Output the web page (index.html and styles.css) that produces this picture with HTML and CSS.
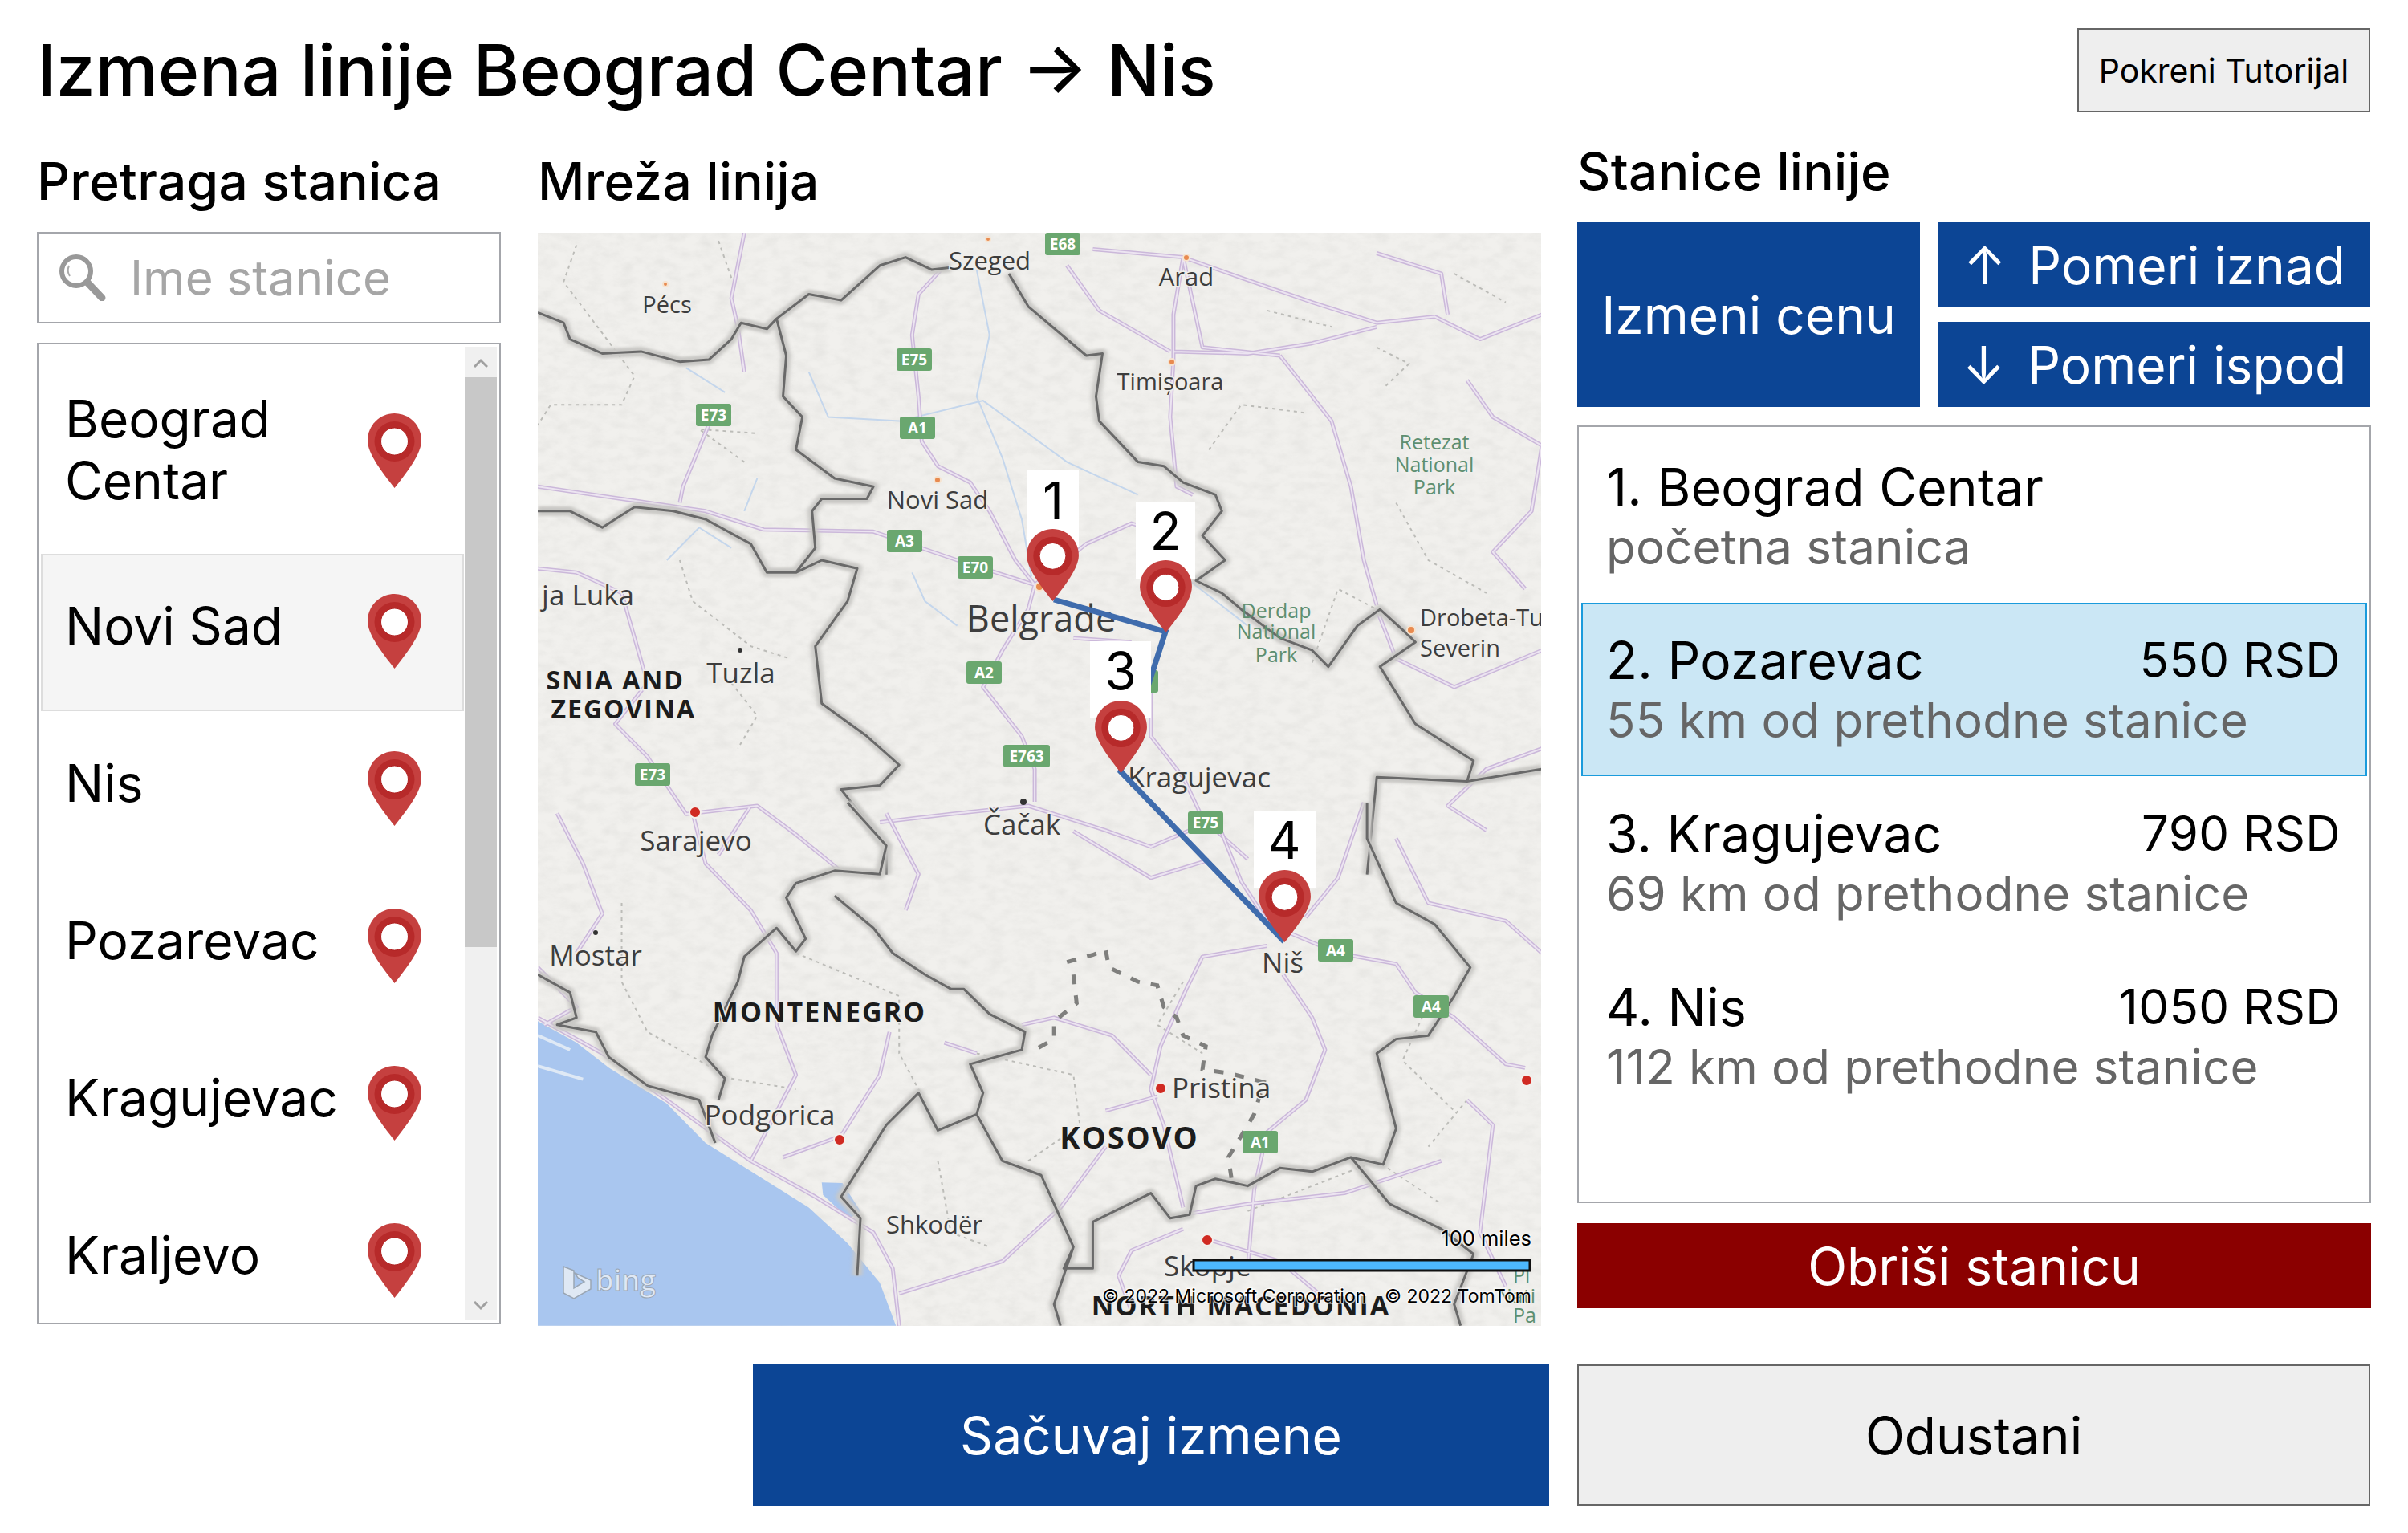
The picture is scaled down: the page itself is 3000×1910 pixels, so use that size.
FILE: index.html
```html
<!DOCTYPE html>
<html lang="sr">
<head>
  <meta charset="UTF-8">
  <title>Izmena linije</title>
  <link rel="stylesheet" href="styles.css">
</head>
<body>

<svg class="defs">
  <defs>
    <symbol id="pin" viewBox="0 0 67 93">
      <path class="pin-body" d="M33.5 0C52 0 67 15 67 34C67 50 50 72 33.5 93C17 72 0 50 0 34C0 15 15 0 33.5 0Z"/>
      <circle class="pin-ring" cx="33.5" cy="35" r="25"/>
      <circle class="pin-hole" cx="33.5" cy="35" r="17"/>
    </symbol>
  </defs>
</svg>

<div class="page">
  <header class="top">
    <h1>Izmena linije Beograd Centar → Nis</h1>
    <button class="btn btn-gray btn-tutorial">Pokreni Tutorijal</button>
  </header>

  <main class="columns">
    <section class="col col-search">
      <h2>Pretraga stanica</h2>
      <div class="search">
        <svg class="search-icon" viewBox="0 0 58 58">
          <circle cx="21" cy="21" r="18" fill="none" stroke="#999" stroke-width="6"/>
          <path d="M35 35L53 54" stroke="#999" stroke-width="9" stroke-linecap="round"/>
          <path d="M12 14Q9 21 13 27" fill="none" stroke="#aaa" stroke-width="2"/>
        </svg>
        <span>Ime stanice</span>
      </div>
      <div class="stations">
        <div class="station-rows">
          <div class="station station-first"><span>Beograd Centar</span><svg class="pin"><use href="#pin"/></svg></div>
          <div class="station station-active"><span>Novi Sad</span><svg class="pin"><use href="#pin"/></svg></div>
          <div class="station"><span>Nis</span><svg class="pin"><use href="#pin"/></svg></div>
          <div class="station"><span>Pozarevac</span><svg class="pin"><use href="#pin"/></svg></div>
          <div class="station"><span>Kragujevac</span><svg class="pin"><use href="#pin"/></svg></div>
          <div class="station"><span>Kraljevo</span><svg class="pin"><use href="#pin"/></svg></div>
        </div>
        <div class="scrollbar">
          <div class="sb-arrow"><svg viewBox="0 0 18 12"><path d="M1 11L9 3L17 11" /></svg></div>
          <div class="sb-thumb"></div>
          <div class="sb-track"></div>
          <div class="sb-arrow sb-arrow-down"><svg viewBox="0 0 18 12"><path d="M1 1L9 9L17 1" /></svg></div>
        </div>
      </div>
    </section>

    <section class="col col-map">
      <h2>Mreža linija</h2>
      <svg class="map" viewBox="0 0 1250 1362">
        <defs>
          <filter id="grain" x="0" y="0" width="100%" height="100%">
            <feTurbulence type="fractalNoise" baseFrequency=".05 .09" numOctaves="4" seed="7"/>
            <feColorMatrix values="0 0 0 0 .5  0 0 0 0 .5  0 0 0 0 .48  1 1 0 0 -.8"/>
          </filter>
          <path id="roads-top" d="M625 90L590 150L580 250L590 400L595 510L620 570L670 610L700 680L740 800L770 860L760 920L720 1020L690 1110L750 1230L770 1310L770 1390M860 40L1000 60L1090 110L1200 170L1300 220L1390 205L1460 260L1556 200M1000 60L985 200L985 310L980 450L990 620L1015 640M985 290L1100 295L1200 270L1300 230M1150 300L1230 460L1260 620L1280 800L1300 910M320 0L300 160L310 230L320 340M270 450L225 620L220 660M0 620L130 650L260 680L350 725L520 730L650 800L770 860M950 1100L950 1230L1000 1330L1030 1430L1100 1530M1440 360L1480 450L1556 520L1540 680L1480 780L1530 870M1300 50L1400 100L1410 200M0 820L60 830L130 880L170 1100L120 1200L170 1280L230 1420L340 1400L400 1470L470 1560M530 1440L640 1420L760 1400L880 1460L950 1500L1040 1440M770 860L850 760L920 710L1010 750M830 990L920 1000M1556 1260L1470 1310L1410 1400L1470 1460M820 80L870 190L980 290M1000 60L1030 280L1150 300M330 1400L280 1520M1300 920L1330 1040L1420 1110L1556 1020"/>
          <path id="roads-bottom" d="M1155 480L1200 600L1220 690L1190 830L1130 920L1110 1080L1100 1300M1160 360L1240 420L1330 450L1360 530L1420 600L1500 730L1530 740M1130 400L1030 430L1005 520L965 680L950 800L970 900L1000 1130M240 30L260 170L330 300L370 420L370 620L400 760L330 1000M545 640L530 760L470 930L380 990M1000 1150L1100 1120L1250 1090L1300 1060L1400 1000M0 600L100 700L200 830L330 1000L430 1100L520 1200L550 1300L560 1460M880 860L960 820M750 620L800 600L890 650L950 760M560 1370L720 1280L810 1130L880 960M1440 830L1480 900L1460 1200L1500 1350M1000 1190L920 1250L900 1320L920 1420M1040 1220L1150 1280L1230 1400M1050 40L1090 220L1130 330M830 80L950 210L1040 160M1280 0L1240 210L1190 320M30 30L70 170L100 310L60 420M0 460L60 570L10 620M570 300L590 200L540 30M630 670L680 700M1330 100L1380 280L1500 330L1556 420"/>
        </defs>
        <rect class="land" width="1250" height="1362"/>
        <rect class="grain" width="1250" height="1362"/>

        <!-- sea and lakes -->
        <g transform="translate(0 710) scale(.804 .4464)">
          <path class="sea" d="M0 610L60 670L110 740L200 840L260 950L340 1040L420 1130L480 1230L530 1340L555 1460L0 1460Z"/>
          <path class="sea" d="M440 1060L472 1062L500 1140L482 1162L442 1095Z"/>
          <path class="foam" d="M0 650L50 690M0 735L70 772"/>
        </g>

        <!-- upper half of the map, traced from the crop -->
        <g transform="scale(.804 .51)">
          <path class="river" d="M680 90L700 250L680 400L720 550L750 700L765 840M420 340L450 450L560 460L690 410L820 560L930 640M340 600L320 680M580 830L600 900L650 960M300 770L250 720L200 800M230 330L290 390M1010 850L1100 960"/>
          <path class="dots" d="M60 30L40 120L150 350L130 420L20 420L0 470M280 20L300 110M320 560L250 480L340 490M1040 530L1090 420L1190 440M1300 280L1350 320L1310 380M1420 100L1500 170M1330 660L1380 800L1470 880M220 800L240 900L330 1010L390 1040M1200 1050L1240 870L1300 920M300 1100L340 1180L310 1260M1130 190L1230 230"/>
          <use href="#roads-top" class="road-out"/>
          <use href="#roads-top" class="road-in"/>
          <path class="border-glow" d="M0 195L40 220L50 260L100 295L160 290L220 315L265 310L300 260L315 220L355 235L370 210L420 150L470 165L530 80L570 60L610 90L640 85M730 100L760 180L850 300L875 295L865 400L870 460L930 560L970 570L1000 610L1050 640L1060 680L1030 740L1065 800L1020 850L1060 880L1090 920L1150 990L1200 1020L1225 1060L1270 960L1305 920L1340 970L1360 1000L1305 1060L1360 1200L1450 1290L1440 1340L1556 1310M1440 1340L1300 1330L1285 1568M370 210L385 300L380 400L410 450L400 530L460 600L520 620L510 650L440 650L425 680L430 770L400 830L355 830L330 760L260 700L210 680L150 670L100 720L50 680L0 680M400 830L440 800L495 820L480 900L430 1010L440 1150L510 1230L560 1300L530 1350L470 1360L540 1500L540 1568"/>
          <path class="border" d="M0 195L40 220L50 260L100 295L160 290L220 315L265 310L300 260L315 220L355 235L370 210L420 150L470 165L530 80L570 60L610 90L640 85M730 100L760 180L850 300L875 295L865 400L870 460L930 560L970 570L1000 610L1050 640L1060 680L1030 740L1065 800L1020 850L1060 880L1090 920L1150 990L1200 1020L1225 1060L1270 960L1305 920L1340 970L1360 1000L1305 1060L1360 1200L1450 1290L1440 1340L1556 1310M1440 1340L1300 1330L1285 1568M370 210L385 300L380 400L410 450L400 530L460 600L520 620L510 650L440 650L425 680L430 770L400 830L355 830L330 760L260 700L210 680L150 670L100 720L50 680L0 680M400 830L440 800L495 820L480 900L430 1010L440 1150L510 1230L560 1300L530 1350L470 1360L540 1500L540 1568"/>
        </g>

        <!-- lower half -->
        <g transform="translate(0 710) scale(.804 .4464)">
          <path class="dots" d="M130 280L130 500L170 640L300 770L400 800M400 420L560 540L560 700L620 900M680 700L830 760L840 900L760 1000M1000 500L960 620L1030 700M1380 560L1340 720L1420 860M620 1000L640 1200L700 1240M1100 1140L1300 1000L1400 1120M1440 830L1380 960"/>
          <use href="#roads-bottom" class="road-out"/>
          <use href="#roads-bottom" class="road-in"/>
          <path class="border-glow" d="M480 0L540 120L530 200L460 190L400 225L385 265L415 380L400 415L370 350L320 430L310 500L270 650L260 710L290 770L280 830M460 260L520 350L550 420L600 480L640 520L660 520L700 590L755 640L750 690L670 730L690 810L680 870L620 915L590 810L540 900L470 1100L500 1160L495 1320M680 870L720 1000L780 1040L830 1240L815 1300L860 1300L860 1170L950 1090L980 1160L1010 1150L1020 1070L1050 1050L1100 1070L1150 1020L1200 1030L1260 990L1310 1010L1330 910L1300 700L1330 660L1380 650L1420 540L1445 460L1390 340L1330 280L1285 100L1285 0M1260 990L1320 1120L1400 1190L1450 1260L1420 1400L1430 1460M830 1240L800 1400L810 1460M0 480L50 530L60 600L30 620L90 640L110 710L170 790L250 830L275 950"/>
          <path class="border" d="M480 0L540 120L530 200L460 190L400 225L385 265L415 380L400 415L370 350L320 430L310 500L270 650L260 710L290 770L280 830M460 260L520 350L550 420L600 480L640 520L660 520L700 590L755 640L750 690L670 730L690 810L680 870L620 915L590 810L540 900L470 1100L500 1160L495 1320M680 870L720 1000L780 1040L830 1240L815 1300L860 1300L860 1170L950 1090L980 1160L1010 1150L1020 1070L1050 1050L1100 1070L1150 1020L1200 1030L1260 990L1310 1010L1330 910L1300 700L1330 660L1380 650L1420 540L1445 460L1390 340L1330 280L1285 100L1285 0M1260 990L1320 1120L1400 1190L1450 1260L1420 1400L1430 1460M830 1240L800 1400L810 1460M0 480L50 530L60 600L30 620L90 640L110 710L170 790L250 830L275 950"/>
          <path class="dashes" d="M820 445L860 425L880 410L885 460L930 500L960 510L970 570L990 600L1000 650L1035 680L1030 745L1070 755L1125 780L1110 870L1070 990L1075 1050M830 480L835 560L800 610L800 660L770 690"/>
        </g>

        <!-- city dots -->
        <circle class="dot-o" cx="159" cy="64" r="3"/>
        <circle class="dot-o" cx="561" cy="8" r="3"/>
        <circle class="dot-o" cx="808" cy="31" r="4"/>
        <circle class="dot-o" cx="790" cy="161" r="4"/>
        <circle class="dot-o" cx="498" cy="308" r="4"/>
        <circle class="dot-o" cx="625" cy="441" r="5"/>
        <circle class="dot-o" cx="1088" cy="495" r="5"/>
        <circle class="dot-r" cx="196" cy="722" r="7"/>
        <circle class="dot-r" cx="776" cy="1066" r="7"/>
        <circle class="dot-r" cx="376" cy="1130" r="7"/>
        <circle class="dot-r" cx="834" cy="1255" r="7"/>
        <circle class="dot-r" cx="1232" cy="1056" r="7"/>
        <circle class="dot-k" cx="252" cy="520" r="3"/>
        <circle class="dot-k" cx="605" cy="709" r="4"/>
        <circle class="dot-k" cx="72" cy="872" r="3"/>

        <!-- road shields -->
        <g class="shield"><rect x="632" y="0" width="44" height="28" rx="3"/><text x="654" y="21">E68</text></g>
        <g class="shield"><rect x="447" y="144" width="44" height="28" rx="3"/><text x="469" y="165">E75</text></g>
        <g class="shield"><rect x="197" y="213" width="44" height="28" rx="3"/><text x="219" y="234">E73</text></g>
        <g class="shield"><rect x="451" y="229" width="44" height="28" rx="3"/><text x="473" y="250">A1</text></g>
        <g class="shield"><rect x="435" y="370" width="44" height="28" rx="3"/><text x="457" y="391">A3</text></g>
        <g class="shield"><rect x="523" y="403" width="44" height="28" rx="3"/><text x="545" y="424">E70</text></g>
        <g class="shield"><rect x="534" y="534" width="44" height="28" rx="3"/><text x="556" y="555">A2</text></g>
        <g class="shield"><rect x="580" y="638" width="58" height="28" rx="3"/><text x="609" y="659">E763</text></g>
        <g class="shield"><rect x="121" y="661" width="44" height="28" rx="3"/><text x="143" y="682">E73</text></g>
        <g class="shield"><rect x="810" y="721" width="44" height="28" rx="3"/><text x="832" y="742">E75</text></g>
        <g class="shield"><rect x="747" y="545" width="26" height="28" rx="3"/></g>
        <g class="shield"><rect x="972" y="880" width="44" height="28" rx="3"/><text x="994" y="901">A4</text></g>
        <g class="shield"><rect x="1091" y="950" width="44" height="28" rx="3"/><text x="1113" y="971">A4</text></g>
        <g class="shield"><rect x="878" y="1119" width="44" height="28" rx="3"/><text x="900" y="1140">A1</text></g>

        <!-- place names -->
        <g class="city">
          <text x="563" y="46" class="mid">Szeged</text>
          <text x="808" y="66" class="mid">Arad</text>
          <text x="161" y="100">Pécs</text>
          <text x="788" y="196">Timișoara</text>
          <text x="498" y="344" class="mid">Novi Sad</text>
          <text x="253" y="561" class="large">Tuzla</text>
          <text x="120" y="464" class="end large">ja Luka</text>
          <text x="197" y="770" class="large">Sarajevo</text>
          <text x="603" y="750" class="large">Čačak</text>
          <text x="824" y="691" class="large">Kragujevac</text>
          <text x="1099" y="490" class="start">Drobeta-Tu</text>
          <text x="1099" y="528" class="start">Severin</text>
          <text x="72" y="913" class="large">Mostar</text>
          <text x="289" y="1112" class="large">Podgorica</text>
          <text x="790" y="1078" class="start large">Pristina</text>
          <text x="494" y="1247" class="mid">Shkodër</text>
          <text x="928" y="922" class="large">Niš</text>
          <text x="780" y="1300" class="start large">Skopje</text>
          <text x="627" y="497" class="capital">Belgrade</text>
        </g>
        <g class="country">
          <text x="183" y="569" class="end">SNIA AND</text>
          <text x="197" y="605" class="end">ZEGOVINA</text>
          <text x="351" y="983" class="mont">MONTENEGRO</text>
          <text x="737" y="1141" class="big">KOSOVO</text>
          <text x="876" y="1349" class="mont">NORTH MACEDONIA</text>
        </g>
        <g class="park">
          <text x="1117" y="270">Retezat</text>
          <text x="1117" y="298">National</text>
          <text x="1117" y="326">Park</text>
          <text x="920" y="480">Derdap</text>
          <text x="920" y="506">National</text>
          <text x="920" y="535">Park</text>
          <text x="1215" y="1308" class="start">Pi</text>
          <text x="1195" y="1334" class="start">Nati</text>
          <text x="1215" y="1358" class="start">Pa</text>
        </g>

        <!-- route -->
        <path class="route" d="M643 457L782 497L726 671L930 883"/>

        <!-- stops -->
        <g class="stop"><rect x="609" y="296" width="65" height="96"/><text x="642" y="357">1</text></g>
        <use href="#pin" x="609" y="369" width="65" height="90"/>
        <g class="stop"><rect x="745" y="335" width="74" height="96"/><text x="782" y="395">2</text></g>
        <use href="#pin" x="750" y="408" width="65" height="90"/>
        <g class="stop"><rect x="688" y="509" width="76" height="96"/><text x="726" y="569">3</text></g>
        <use href="#pin" x="694" y="583" width="65" height="90"/>
        <g class="stop"><rect x="892" y="720" width="77" height="96"/><text x="930" y="780">4</text></g>
        <use href="#pin" x="898" y="794" width="65" height="90"/>

        <!-- map furniture -->
        <g class="bing">
          <path d="M32 1288L45 1293V1315L58 1307L50 1302L46 1296L66 1305V1316L45 1328L32 1321Z"/>
          <text x="72" y="1318">bing</text>
        </g>
        <text class="legal legal-scale" x="1238" y="1262" text-anchor="end">100 miles</text>
        <rect class="scale" x="817" y="1280" width="419" height="13"/>
        <text class="legal" x="703" y="1333">© 2022 Microsoft Corporation</text>
        <text class="legal" x="1238" y="1333" text-anchor="end">© 2022 TomTom</text>
      </svg>
    </section>

    <section class="col col-route">
      <h2>Stanice linije</h2>
      <div class="actions">
        <button class="btn btn-blue btn-price">Izmeni cenu</button>
        <button class="btn btn-blue"><span class="arrow">↑</span>Pomeri iznad</button>
        <button class="btn btn-blue"><span class="arrow">↓</span>Pomeri ispod</button>
      </div>
      <div class="route-list">
        <div class="stop-row">
          <div class="stop-head"><span>1. Beograd Centar</span></div>
          <div class="stop-sub">početna stanica</div>
        </div>
        <div class="stop-row stop-row-active">
          <div class="stop-head"><span>2. Pozarevac</span><span class="price">550 RSD</span></div>
          <div class="stop-sub">55 km od prethodne stanice</div>
        </div>
        <div class="stop-row">
          <div class="stop-head"><span>3. Kragujevac</span><span class="price">790 RSD</span></div>
          <div class="stop-sub">69 km od prethodne stanice</div>
        </div>
        <div class="stop-row">
          <div class="stop-head"><span>4. Nis</span><span class="price">1050 RSD</span></div>
          <div class="stop-sub">112 km od prethodne stanice</div>
        </div>
      </div>
      <button class="btn btn-delete">Obriši stanicu</button>
    </section>
  </main>

  <footer class="bottom">
    <button class="btn btn-blue btn-save">Sačuvaj izmene</button>
    <button class="btn btn-gray btn-cancel">Odustani</button>
  </footer>
</div>

</body>
</html>
```

FILE: styles.css
```css
* {
  box-sizing: border-box;
}

body {
  margin: 0;
  background-color: #fff;
  font-family: Inter, "Liberation Sans", sans-serif;
  color: #000;
}

.defs {
  position: absolute;
  width: 0;
  height: 0;
}

.page {
  width: 3000px;
  height: 1910px;
  overflow: hidden;
}

/* header */
.top {
  display: flex;
  justify-content: space-between;
  align-items: flex-start;
  height: 175px;
  padding: 35px 47px 0 46px;
}

h1 {
  margin: 0;
  font-size: 87.6px;
  font-weight: 500;
  line-height: 105px;
}

h2 {
  margin: 0 0 25px;
  font-size: 64px;
  font-weight: 500;
  line-height: 77px;
  letter-spacing: .3px;
}

/* buttons */
.btn {
  display: flex;
  align-items: center;
  justify-content: center;
  padding: 0;
  border: none;
  font-family: inherit;
  font-size: 64px;
}

.btn-blue {
  background-color: #0c4595;
  color: #fff;
}

.btn-gray {
  background-color: #eee;
  border: 2px solid #666;
  color: #000;
}

.btn-tutorial {
  width: 365px;
  height: 105px;
  font-size: 41px;
}

.btn-delete {
  width: 100%;
  height: 106px;
  margin-top: 25px;
  background-color: #8b0000;
  color: #fff;
}

/* columns */
.columns {
  display: grid;
  grid-template-columns: 578px 1250px 988px;
  column-gap: 46px;
  height: 1477px;
  padding-left: 46px;
}

.col-search,
.col-map {
  padding-top: 12px;
}

.col-map h2 {
  margin-bottom: 26px;
}

.col-route {
  margin-left: -1px;
}

/* search */
.search {
  display: flex;
  align-items: center;
  height: 114px;
  padding-left: 26px;
  border: 2px solid #a4a6ab;
  color: #a6a6a6;
  font-size: 60px;
}

.search-icon {
  width: 58px;
  height: 58px;
  margin-right: 30px;
}

/* station list */
.stations {
  display: flex;
  height: 1223px;
  margin-top: 24px;
  padding: 3px;
  border: 2px solid #a4a6ab;
}

.station-rows {
  flex: 1;
  overflow: hidden;
}

.station {
  display: flex;
  align-items: center;
  justify-content: space-between;
  height: 196px;
  padding: 0 51px 0 28px;
  border: 2px solid transparent;
  font-size: 64px;
}

.station span {
  max-width: 345px;
  margin-top: -18px;
}

.station .pin {
  margin-top: -4px;
}

.station-first {
  height: 258px;
}

.station-first span {
  margin-top: -2px;
}

.station-first .pin {
  margin-top: 0;
}

.station-active {
  background-color: #f5f5f5;
  border-color: #ddd;
}

.pin {
  width: 67px;
  height: 93px;
  flex-shrink: 0;
}

.pin-body {
  fill: #c5403f;
}

.pin-ring {
  fill: #b72a2a;
}

.pin-hole {
  fill: #fff;
  stroke: #b01f1f;
  stroke-width: 1;
}

/* scrollbar */
.scrollbar {
  display: flex;
  flex-direction: column;
  flex-shrink: 0;
  width: 40px;
  margin-left: 1px;
  background-color: #f0f0f0;
}

.sb-arrow {
  display: flex;
  justify-content: center;
  height: 38px;
  padding-top: 14px;
}

.sb-arrow svg {
  width: 18px;
  height: 12px;
}

.sb-arrow path {
  fill: none;
  stroke: #a0a0a0;
  stroke-width: 3;
}

.sb-thumb {
  height: 710px;
  background-color: #c8c8c8;
}

.sb-track {
  flex: 1;
}

/* map */
.map {
  display: block;
  width: 1250px;
  height: 1362px;
}

.map path {
  vector-effect: non-scaling-stroke;
}

.land {
  fill: #f1f0ed;
}

.grain {
  filter: url(#grain);
  opacity: .22;
}

.sea {
  fill: #a9c6ef;
}

.foam {
  fill: none;
  stroke: #dfe9f5;
  stroke-width: 4;
}

.river {
  fill: none;
  stroke: #c4d6ec;
  stroke-width: 2;
}

.dots {
  fill: none;
  stroke: #bcbcb8;
  stroke-width: 2;
  stroke-dasharray: 4 5;
}

.road-out,
.road-in {
  fill: none;
  stroke-linejoin: round;
}

.road-out {
  stroke: #cbb8da;
  stroke-width: 5;
}

.road-in {
  stroke: #ece4f1;
  stroke-width: 2;
}

.border-glow {
  fill: none;
  stroke: #c9c8c5;
  stroke-width: 12;
  stroke-linejoin: round;
  filter: blur(3px);
}

.border {
  fill: none;
  stroke: #696969;
  stroke-width: 3;
  stroke-linejoin: round;
}

.dashes {
  fill: none;
  stroke: #7f7f7d;
  stroke-width: 5;
  stroke-dasharray: 12 14;
}

.dot-o {
  fill: #e88a4f;
  stroke: #f6e3cf;
  stroke-width: 2;
}

.dot-r {
  fill: #d02a22;
  stroke: #f4f0ec;
  stroke-width: 2;
}

.dot-k {
  fill: #333;
}

.shield rect {
  fill: #6aa76f;
}

.shield text {
  fill: #fff;
  font-family: "Open Sans", sans-serif;
  font-size: 19px;
  font-weight: 700;
  text-anchor: middle;
}

.city text {
  fill: #3d3d3d;
  font-family: "Open Sans", sans-serif;
  font-size: 29px;
  text-anchor: middle;
  stroke: #efeeeb;
  stroke-width: 3px;
  paint-order: stroke;
}

.city .mid {
  font-size: 31px;
}

.city .large {
  font-size: 35px;
}

.city .start {
  text-anchor: start;
}

.city .end {
  text-anchor: end;
}

.city .capital {
  font-size: 45px;
}

.country text {
  fill: #1c1c1c;
  font-family: "Open Sans", sans-serif;
  font-size: 32px;
  font-weight: 700;
  letter-spacing: 2px;
  text-anchor: middle;
  stroke: #efeeeb;
  stroke-width: 3px;
  paint-order: stroke;
}

.country .end {
  text-anchor: end;
}

.country .mont {
  font-size: 34px;
}

.country .big {
  font-size: 38px;
}

.park text {
  fill: #5e8f70;
  font-family: "Open Sans", sans-serif;
  font-size: 25px;
  text-anchor: middle;
}

.park .start {
  text-anchor: start;
}

.route {
  fill: none;
  stroke: #3f6cad;
  stroke-width: 7;
}

.stop rect {
  fill: #fff;
}

.stop text {
  font-family: Inter, sans-serif;
  font-size: 64px;
  text-anchor: middle;
}

.bing path {
  fill: #dfe8f4;
  stroke: #9aa6b4;
  stroke-width: 1.5;
}

.bing text {
  fill: #dfe8f4;
  stroke: #9aa6b4;
  stroke-width: 1px;
  font-family: "Open Sans", sans-serif;
  font-size: 36px;
  font-weight: 600;
}

.legal {
  fill: #000;
  font-family: Inter, sans-serif;
  font-size: 23px;
  stroke: #fff;
  stroke-width: 3px;
  stroke-opacity: .7;
  paint-order: stroke;
}

.legal-scale {
  font-size: 25.5px;
}

.scale {
  fill: #4db8ff;
  stroke: #111;
  stroke-width: 3;
}

/* route column */
.actions {
  display: grid;
  grid-template-columns: 427px 538px;
  grid-template-rows: 106px 106px;
  gap: 18px 23px;
}

.btn-price {
  grid-row: span 2;
}

.arrow {
  margin-right: 28px;
}

.route-list {
  height: 969px;
  margin-top: 23px;
  padding: 3px;
  border: 2px solid #a4a6ab;
}

.stop-row {
  height: 216px;
  padding: 31px 31px 0 29px;
  border: 2px solid transparent;
}

.stop-row-active {
  background-color: #cbe7f5;
  border-color: #1a9bdc;
}

.stop-head {
  display: flex;
  justify-content: space-between;
  font-size: 64px;
  line-height: 77px;
  letter-spacing: .33px;
}

.price {
  font-size: 60px;
}

.stop-sub {
  color: #666;
  font-size: 60px;
  line-height: 73px;
  letter-spacing: .2px;
}

/* footer */
.bottom {
  display: grid;
  grid-template-columns: 992px 988px;
  column-gap: 35px;
  height: 176px;
  margin-top: 48px;
  padding-left: 938px;
}
```
